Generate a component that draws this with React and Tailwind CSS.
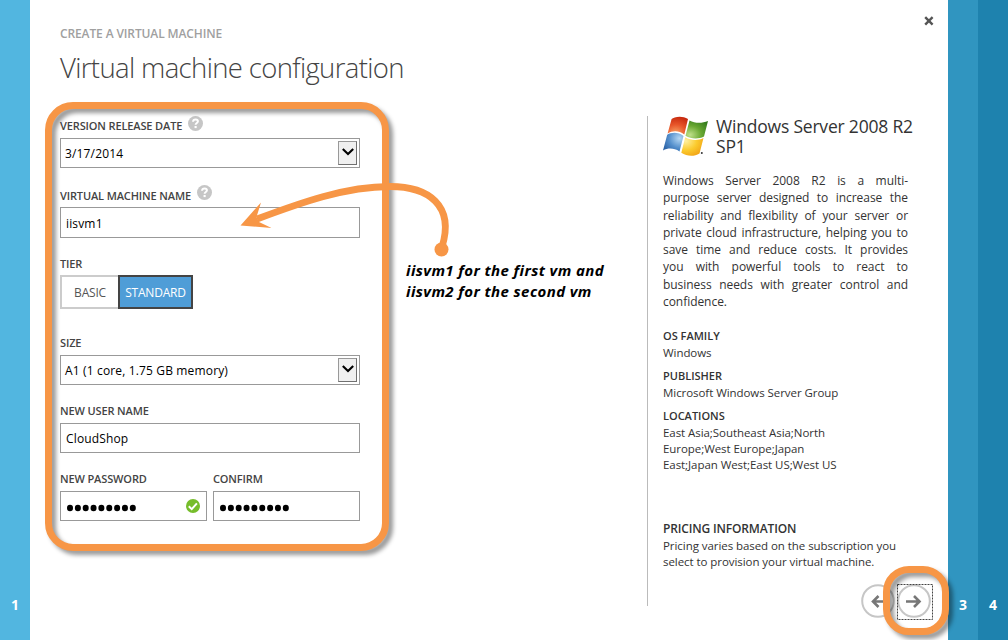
import React from "react";

const description = [
  "Windows Server 2008 R2 is a multi-",
  "purpose server designed to increase the",
  "reliability and flexibility of your server or",
  "private cloud infrastructure, helping you to",
  "save time and reduce costs. It provides",
  "you with powerful tools to react to",
  "business needs with greater control and",
];

function Label({ children, help, className = "" }) {
  return (
    <div className={`flex items-center whitespace-nowrap text-[11px] font-semibold leading-6 tracking-[-0.13px] text-[#444] ${className}`}>
      <span>{children}</span>
      {help && (
        <svg className="mb-[6px] ml-[6px] h-[15px] w-[15px]" viewBox="0 0 14 14">
          <circle cx="7" cy="7" r="7" fill="#c6c6c6" />
          <path d="M4.700 5.400C4.800 3.800 5.800 3.200 7.100 3.200c1.300 0 2.200.7 2.200 1.800 0 1.500-2.200 1.500-2.200 3.200" fill="none" stroke="#fff" strokeWidth="1.800" />
          <rect x="6.100" y="9.300" width="2" height="2" fill="#fff" />
        </svg>
      )}
    </div>
  );
}

function Field({ children, className = "h-[30px] pl-[5px]" }) {
  return (
    <div className={`flex items-center border border-[#999] bg-white text-[12px] tracking-[0.15px] text-black ${className}`}>
      {children}
    </div>
  );
}

function Select({ children }) {
  return (
    <Field className="h-[30px] justify-between pr-[2px] pl-[4px]">
      <span className="pt-[2px]">{children}</span>
      <div className="flex h-6 w-[19px] items-center justify-center border border-t-[#999] border-r-[#707070] border-b-[#707070] border-l-[#999] bg-[#f0f0f0]">
        <svg className="mb-[3px] h-[8px] w-[12px]" viewBox="0 0 12 8">
          <path d="M.8 1l5.200 5 5.200-5" fill="none" stroke="#000" strokeWidth="2.100" />
        </svg>
      </div>
    </Field>
  );
}

function Dots() {
  return (
    <svg className="mt-[3px] h-[8px] w-[72px]" viewBox="0 0 72 8">
      {[0, 1, 2, 3, 4, 5, 6, 7, 8].map((i) => (
        <ellipse key={i} cx={4 + i * 7.85} cy="4" rx="3" ry="3.300" />
      ))}
    </svg>
  );
}

function WindowsLogo() {
  return (
    <svg className="h-[42px] w-[46px] shrink-0" viewBox="0 0 46 42">
      <defs>
        <radialGradient id="r" cx=".4" cy=".95" r="1"><stop offset="0" stopColor="#f8a868" /><stop offset=".5" stopColor="#e8562a" /><stop offset="1" stopColor="#c4260c" /></radialGradient>
        <radialGradient id="g" cx=".2" cy=".8" r="1"><stop offset="0" stopColor="#c0e08a" /><stop offset=".5" stopColor="#6aa832" /><stop offset="1" stopColor="#327a1c" /></radialGradient>
        <radialGradient id="b" cx=".8" cy=".3" r="1"><stop offset="0" stopColor="#b5d8f4" /><stop offset=".5" stopColor="#5590cc" /><stop offset="1" stopColor="#1f569c" /></radialGradient>
        <radialGradient id="y" cx=".2" cy=".2" r="1"><stop offset="0" stopColor="#fff0a0" /><stop offset=".5" stopColor="#fbcb2e" /><stop offset="1" stopColor="#ef9a10" /></radialGradient>
      </defs>
      <path d="M8.600 3C11 .8 19 -1 25 3L21.300 18.500C16 14.500 9.500 14.500 4.600 17.500Z" fill="url(#r)" />
      <path d="M26.500 4.500C32 7.500 39 7.500 45 5L41 20.500C35 23.500 28 23 22.500 19.700Z" fill="url(#g)" />
      <path d="M4.200 18.800C9 16 15.500 16 20.500 20L16.500 35.500C11 31.800 5 31.800 0 34.500Z" fill="url(#b)" />
      <path d="M22.200 21.200C28 24.500 34.500 25 40.500 22L36.500 37.500C31 40.800 24 40.500 18.300 36.800Z" fill="url(#y)" />
      <circle cx="38.800" cy="37" r="1" fill="#333" />
    </svg>
  );
}

function NavButton({ back }) {
  return (
    <svg className="h-[34px] w-[34px]" viewBox="0 0 34 34">
      <circle cx="17" cy="17" r="15.800" fill="#fff" stroke="#c6c6c6" strokeWidth="2" />
      <path d={back ? "M25 17.500H12.500M17.500 12l-5.500 5.500 5.500 5.500" : "M9 17.500h13M17 12l5.500 5.500L17 23"} fill="none" stroke="#777" strokeWidth="2.600" />
    </svg>
  );
}

function Info({ title, children }) {
  return (
    <div className="mb-2">
      <div className="text-[11px] font-semibold leading-4">{title}</div>
      <div className="mb-[-1px] whitespace-nowrap pt-px text-[11.500px] leading-4 tracking-[-0.06px]">{children}</div>
    </div>
  );
}

export default function App() {
  return (
    <div className="relative flex h-[640px] w-[1008px] overflow-hidden bg-white font-['Open_Sans',sans-serif] text-[#333]">
      <aside className="flex w-[30px] items-end justify-center bg-[#52b6e0] pb-[25px] text-[14px] font-bold leading-5 text-white">1</aside>

      <main className="flex w-[617px] flex-col pl-[30px]">
        <div className="mt-[24px] h-5 whitespace-nowrap text-[12px] font-semibold leading-5 tracking-[-0.12px] text-[#a0a0a0]">CREATE A VIRTUAL MACHINE</div>
        <h1 className="mt-[4px] h-10 whitespace-nowrap text-[27.500px] font-light leading-[39px] tracking-[-0.64px] text-[#444]">Virtual machine configuration</h1>
        <form className="mt-[26px] flex w-[300px] flex-col">
          <Label help className="h-6">VERSION RELEASE DATE</Label>
          <Select>3/17/2014</Select>
          <Label help className="mt-[16px] h-[23px]">VIRTUAL MACHINE NAME</Label>
          <Field className="h-[31px] pl-[5px] pt-[2px]">iisvm1</Field>
          <Label className="mt-[14px] h-[23px]">TIER</Label>
          <div className="flex h-[34px] text-[12px] tracking-[-0.2px]">
            <div className="flex w-[58px] items-center justify-center border-2 border-r-0 border-[#ccc] pt-[2px] text-[#555]">BASIC</div>
            <div className="flex w-[75px] items-center justify-center border-2 border-[#444] bg-[#4f9dd7] pt-[2px] text-white">STANDARD</div>
          </div>
          <Label className="mt-[22px] h-6">SIZE</Label>
          <Select>A1 (1 core, 1.75 GB memory)</Select>
          <Label className="mt-[14px] h-6">NEW USER NAME</Label>
          <Field className="h-[30px] pl-[5px] pt-[2px]">CloudShop</Field>
          <div className="mt-[14px] grid grid-cols-2 gap-[6px]">
            <div>
              <Label className="h-6">NEW PASSWORD</Label>
              <Field className="h-[30px] justify-between pl-[5px] pr-[6px]">
                <Dots />
                <svg className="h-[14px] w-[14px]" viewBox="0 0 14 14">
                  <circle cx="7" cy="7" r="7" fill="#76bd2b" />
                  <path d="M2.800 7.200l2.900 2.900 5.200-5.800" fill="none" stroke="#fff" strokeWidth="2" />
                </svg>
              </Field>
            </div>
            <div>
              <Label className="h-6">CONFIRM</Label>
              <Field><Dots /></Field>
            </div>
          </div>
        </form>
      </main>

      <section className="mt-[116px] flex h-[490px] w-[301px] flex-col border-l border-[#bbb] pl-[15px]">
        <div className="flex h-[56px]">
          <WindowsLogo />
          <div className="ml-[7px] whitespace-nowrap text-[17.500px] leading-5 tracking-[-0.2px]">Windows Server 2008 R2<br />SP1</div>
        </div>
        <div className="w-[245px] whitespace-nowrap text-[12px] leading-[17.300px] tracking-[-0.05px]">
          {description.map((line) => (
            <div key={line} className="text-justify [text-align-last:justify]">{line}</div>
          ))}
          <div>confidence.</div>
        </div>
        <div className="mt-[18px]">
          <Info title="OS FAMILY">Windows</Info>
          <Info title="PUBLISHER">Microsoft Windows Server Group</Info>
          <Info title="LOCATIONS">East Asia;Southeast Asia;North<br />Europe;West Europe;Japan<br />East;Japan West;East US;West US</Info>
        </div>
        <div className="mt-[41px] whitespace-nowrap text-[11.500px] leading-4 tracking-[-0.06px]">
          <div className="mb-px text-[12px] font-semibold tracking-[-0.15px]">PRICING INFORMATION</div>
          Pricing varies based on the subscription you<br />select to provision your virtual machine.
        </div>
      </section>

      <aside className="flex w-[30px] items-end justify-center bg-[#3095c0] pb-[25px] text-[14px] font-bold leading-5 text-white">3</aside>
      <aside className="flex w-[30px] items-end justify-center bg-[#1e82ae] pb-[25px] text-[14px] font-bold leading-5 text-white">4</aside>

      <svg className="absolute left-[924px] top-[16px] h-[10px] w-[10px]" viewBox="0 0 10 10">
        <path d="M1.200 1.200l7.400 7.400M8.600 1.200L1.200 8.600" stroke="#555" strokeWidth="2.400" />
      </svg>

      <div className="absolute left-[861px] top-[584px] flex gap-[2px]">
        <NavButton back />
        <NavButton />
      </div>
      <svg className="absolute left-[897px] top-[584px] h-[36px] w-[36px]" viewBox="0 0 36 36">
        <rect x=".5" y=".5" width="35" height="35" fill="none" stroke="#444" strokeDasharray="2 1" />
      </svg>

      <div className="absolute left-[45px] top-[102px] h-[449px] w-[344px] rounded-[28px] border-[7px] border-[#f79646] drop-shadow-[4px_4px_2px_rgba(0,0,0,0.4)]" />
      <div className="absolute left-[883px] top-[566px] h-[69px] w-[66px] rounded-[26px] border-[7px] border-[#f79646] drop-shadow-[4px_4px_2px_rgba(0,0,0,0.4)]" />

      <svg className="absolute left-[230px] top-[170px] h-[95px] w-[230px]" viewBox="230 170 230 95">
        <path d="M442 247C455 205 428 186.500 390 186.500C345 186.500 300 203 257 219" fill="none" stroke="#f79646" strokeWidth="6.800" />
        <circle cx="441.500" cy="249.500" r="7" fill="#f79646" />
        <path d="M240.500 225.500L261 202.500L256.500 217L259 222L271.500 228Z" fill="#f79646" />
      </svg>

      <p className="absolute left-[406px] top-[260px] whitespace-nowrap font-['Noto_Sans',sans-serif] text-[15px] font-bold italic leading-[21px] tracking-[0.4px] text-black">
        iisvm1 for the first vm and<br />iisvm2 for the second vm
      </p>
    </div>
  );
}
